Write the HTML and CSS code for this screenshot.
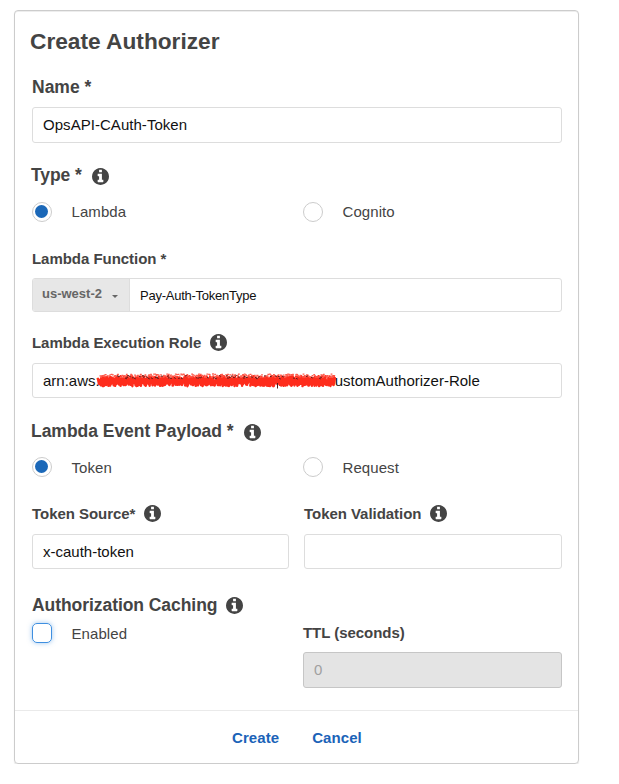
FILE: index.html
```html
<!DOCTYPE html>
<html lang="en">
<head>
<meta charset="utf-8">
<title>Create Authorizer</title>
<link rel="stylesheet" href="styles.css">
</head>
<body>
<svg class="defs" width="0" height="0" aria-hidden="true">
  <symbol id="info" viewBox="0 128 1536 1536"><path d="M1024 1376v-160q0-14-9-23t-23-9h-96v-512q0-14-9-23t-23-9h-320q-14 0-23 9t-9 23v160q0 14 9 23t23 9h96v320h-96q-14 0-23 9t-9 23v160q0 14 9 23t23 9h448q14 0 23-9t9-23zm-128-896v-160q0-14-9-23t-23-9h-192q-14 0-23 9t-9 23v160q0 14 9 23t23 9h192q14 0 23-9t9-23zm640 416q0 209-103 385.500t-279.500 279.500-385.500 103-385.500-103-279.500-279.500-103-385.500 103-385.500 279.500-279.500 385.500-103 385.500 103 279.500 279.500 103 385.500z"/></symbol>
</svg>
<form class="card">
  <div class="body">
    <h1 class="title">Create Authorizer</h1>

    <div class="label large name-label">Name *</div>
    <div class="field name-field">OpsAPI-CAuth-Token</div>

    <div class="label large type-label">Type *<svg class="info low"><use href="#info"/></svg></div>
    <div class="choices type-choices">
      <div class="choice"><span class="radio checked"></span><span>Lambda</span></div>
      <div class="choice"><span class="radio"></span><span>Cognito</span></div>
    </div>

    <div class="label function-label">Lambda Function *</div>
    <div class="group">
      <div class="region"><span>us-west-2</span><span class="caret"></span></div>
      <div class="function">Pay-Auth-TokenType</div>
    </div>

    <div class="label role-label">Lambda Execution Role<svg class="info"><use href="#info"/></svg></div>
    <div class="field role-field"><span class="arn-start">arn:aws:</span><svg class="scribble" viewBox="0 0 244 18"></svg><span class="arn-end">ustomAuthorizer-Role</span></div>

    <div class="label large payload-label">Lambda Event Payload *<svg class="info low"><use href="#info"/></svg></div>
    <div class="choices payload-choices">
      <div class="choice"><span class="radio checked"></span><span class="drop">Token</span></div>
      <div class="choice"><span class="radio"></span><span class="drop">Request</span></div>
    </div>

    <div class="pair">
      <div>
        <div class="label">Token Source*<svg class="info"><use href="#info"/></svg></div>
        <div class="field">x-cauth-token</div>
      </div>
      <div>
        <div class="label">Token Validation<svg class="info"><use href="#info"/></svg></div>
        <div class="field"></div>
      </div>
    </div>

    <div class="label large caching-label">Authorization Caching<svg class="info mid"><use href="#info"/></svg></div>
    <div class="choices caching">
      <div class="choice"><span class="checkbox"></span><span class="drop">Enabled</span></div>
      <div>
        <div class="label">TTL (seconds)</div>
        <div class="field disabled">0</div>
      </div>
    </div>
  </div>
  <div class="footer">
    <a class="action">Create</a>
    <a class="action">Cancel</a>
  </div>
</form>
<script src="scribble.js"></script>
</body>
</html>
```
FILE: styles.css
```css
* { box-sizing: border-box; }
body {
  margin: 0;
  padding: 10px 0 0 14px;
  background: #fff;
  color: #444;
  font: 15px/20px "Liberation Sans", Arial, sans-serif;
}
.defs { display: block; }
.card {
  display: flex;
  flex-direction: column;
  width: 565px;
  height: 754px;
  border: 1px solid #ccc;
  border-radius: 4px;
  box-shadow: 0 1px 1px rgba(0, 0, 0, .12), inset 0 1px 0 rgba(0, 0, 0, .07);
}
.body { padding: 0 16px 0 17px; }
.title { margin: 16px 0 0 -2px; font-size: 22.7px; line-height: 28px; }
.label { display: flex; align-items: center; height: 20px; font-weight: bold; letter-spacing: -.04px; white-space: nowrap; }
.label.large { font-size: 17.5px; letter-spacing: 0; }
.info { flex: none; width: 17px; height: 17px; margin: -1px 0 0 9px; fill: #444; }
.info.low { margin: 3px 0 0 10px; }
.info.mid { margin-top: 1px; }
.field {
  display: flex;
  align-items: center;
  height: 35px;
  padding: 0 10px;
  border: 1px solid #ddd;
  border-radius: 3px;
  color: #111;
  white-space: nowrap;
}
.name-label { margin-top: 22px; }
.name-field { height: 36px; margin-top: 10px; letter-spacing: .04px; }
.label.type-label { margin: 22px 0 0 -1px; letter-spacing: -.1px; }
.choices { display: grid; grid-template-columns: 271px 259px; }
.choice { display: flex; align-items: center; gap: 19.5px; height: 20px; letter-spacing: .08px; }
.drop { padding-top: 2px; }
.type-choices { margin-top: 17px; }
.radio { display: flex; align-items: center; justify-content: center; width: 20px; height: 20px; border: 1px solid #ccc; border-radius: 50%; }
.radio.checked::before { content: ""; width: 13px; height: 13px; margin: 0 1px 1px 0; border-radius: 50%; background: #1b68b8; }
.function-label { margin-top: 27px; }
.group { display: flex; height: 34px; margin-top: 9px; border: 1px solid #ddd; border-radius: 3px; overflow: hidden; }
.region { display: flex; align-items: center; gap: 10px; width: 97px; padding: 0 0 2px 9px; border-right: 1px solid #ddd; background: #e7e7e7; color: #666; font-size: 13px; font-weight: bold; }
.caret { margin-top: 4px; border: solid transparent; border-width: 3.5px 3.5px 0; border-top-color: #666; }
.function { display: flex; align-items: center; padding: 2px 0 0 10px; color: #111; font-size: 13px; letter-spacing: -.25px; }
.role-label { margin-top: 21px; }
.role-field { position: relative; margin-top: 10px; }
.scribble { position: absolute; left: 63px; top: 8px; width: 244px; height: 18px; }
.arn-end { margin-left: 235px; }
.label.payload-label { margin: 23px 0 0 -1px; letter-spacing: -.03px; }
.payload-choices { margin-top: 16px; }
.pair { display: grid; grid-template-columns: 257px 258px; gap: 15px; margin-top: 27px; }
.pair .field { margin-top: 10px; }
.label.caching-label { margin-top: 26px; letter-spacing: -.06px; }
.caching { margin-top: 8px; }
.checkbox { width: 20px; height: 20px; border: 1px solid #3f8fe0; border-radius: 5px; box-shadow: 0 0 5px rgba(63, 143, 224, .5); }
.disabled { height: 36px; margin-top: 9px; border-color: #c6c6c6; background: #e4e4e4; color: #a0a0a0; }
.footer { display: flex; gap: 33px; height: 53px; margin-top: 22px; padding: 2px 0 0 217px; border-top: 1px solid #eaeaea; align-items: center; }
.action { color: #1b63b8; font-weight: bold; letter-spacing: .08px; }
```
FILE: scribble.js
```js
// Draws a rough brush stroke, with the same grain on every load.
(function () {
  var seed = 7;
  function rnd() { seed = (seed * 16807) % 2147483647; return seed / 2147483647; }
  function path(d, color, width) {
    var p = document.createElementNS("http://www.w3.org/2000/svg", "path");
    p.setAttribute("d", d);
    p.setAttribute("fill", "none");
    p.setAttribute("stroke", color);
    p.setAttribute("stroke-width", width);
    p.setAttribute("stroke-linejoin", "round");
    document.querySelector(".scribble").appendChild(p);
  }
  var body = "M3 9", grain = "", ink = "", x;
  for (x = 2; x < 238; x += 1) {
    body += "L" + (x + rnd() * 3).toFixed(1) + " " + (4 + rnd() * 3).toFixed(1);
    body += "L" + (x + rnd() * 3).toFixed(1) + " " + (11 + rnd() * 3.2).toFixed(1);
    grain += "M" + (x + rnd() * 2).toFixed(1) + " " + (2 + rnd() * 3.5).toFixed(1) + "h1.8";
    if (rnd() > .72 && x > 20 && x < 225) {
      ink += "M" + x.toFixed(1) + " " + (3.5 + rnd() * 3).toFixed(1) + "l1.8 " + (rnd() * 2 - 1).toFixed(1);
    }
  }
  path(body, "#fe2c1c", 2.4);
  path(grain, "#fe5a4c", 1.3);
  path(ink, "#5a1d1b", 1);
  path("M181.500 11v5.500", "#4a1d1b", 1);
})();
```
